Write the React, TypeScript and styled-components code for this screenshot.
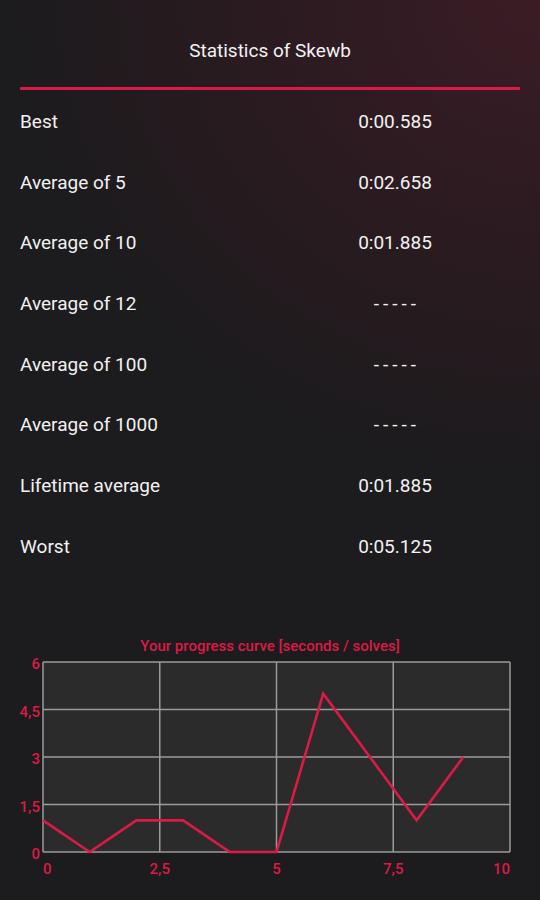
import * as React from "react";
import styled, {createGlobalStyle} from "styled-components";

const GlobalStyle = createGlobalStyle`
  html, body {
    margin: 0;
    padding: 0;
    background: #1c1b1d;
  }
  * {
    box-sizing: border-box;
  }
`;

const RED = "#dc1a45";

const Page = styled.div`
  width: 540px;
  min-height: 900px;
  font-family: Roboto, "Noto Sans", sans-serif;
  color: #f2f2f2;
  background:
    radial-gradient(ellipse 620px 560px at 100% 0%, #3b1c25 0%, #2c1b21 40%, rgba(28, 27, 29, 0) 85%),
    #1c1b1d;
  overflow: hidden;
`;

const Header = styled.header`
  padding: 39px 20px 0;
`;

const Title = styled.h1`
  margin: 0;
  font-size: 19px;
  line-height: 24px;
  font-weight: 400;
  text-align: center;
`;

const Divider = styled.div`
  height: 3px;
  margin-top: 24px;
  background: ${RED};
  border-radius: 1px;
`;

const StatsList = styled.div`
  padding: 1px 20px 0;
`;

const StatRow = styled.div`
  display: grid;
  grid-template-columns: 1fr 1fr;
  align-items: center;
  height: 60.7px;
  font-size: 19px;
`;

const Label = styled.span`
  text-align: left;
`;

const Value = styled.span<{ $empty?: boolean }>`
  text-align: center;
  letter-spacing: ${p => (p.$empty ? "4px" : "0")};
  padding-left: ${p => (p.$empty ? "4px" : "0")};
`;

const ChartSection = styled.section`
  margin-top: 60px;
  display: flex;
  flex-direction: column;
  align-items: center;
`;

const ChartTitle = styled.div`
  font-size: 15px;
  line-height: 18px;
  font-weight: 500;
  color: ${RED};
`;

const ChartSvg = styled.svg`
  display: block;
  width: 540px;
  height: 232px;
`;

interface IStat {
    label: string;
    value: string | null;
}

const stats: IStat[] = [
    {label: "Best", value: "0:00.585"},
    {label: "Average of 5", value: "0:02.658"},
    {label: "Average of 10", value: "0:01.885"},
    {label: "Average of 12", value: null},
    {label: "Average of 100", value: null},
    {label: "Average of 1000", value: null},
    {label: "Lifetime average", value: "0:01.885"},
    {label: "Worst", value: "0:05.125"},
];

const solves = [1, 0, 1, 1, 0, 0, 5, 3, 1, 3];

// plot box inside the svg
const PX0 = 43;
const PX1 = 510;
const PY0 = 7;
const PY1 = 197;
const X_MAX = 10;
const Y_MAX = 6;

const sx = (v: number) => PX0 + (v / X_MAX) * (PX1 - PX0);
const sy = (v: number) => PY1 - (v / Y_MAX) * (PY1 - PY0);

const xTicks = [0, 2.5, 5, 7.5, 10];
const yTicks = [0, 1.5, 3, 4.5, 6];
const fmt = (v: number) => String(v).replace(".", ",");

const ProgressChart: React.FC = () => {
    const points = solves.map((v, i) => `${sx(i)},${sy(v)}`).join(" ");
    return (
        <ChartSvg viewBox="0 0 540 232">
            <rect x={PX0} y={PY0} width={PX1 - PX0} height={PY1 - PY0} fill="#2b2b2b"/>
            {yTicks.map(t => (
                <line key={"h" + t} x1={PX0} x2={PX1} y1={sy(t)} y2={sy(t)}
                      stroke="#9b9b9b" strokeWidth={1.5}/>
            ))}
            {xTicks.map(t => (
                <line key={"v" + t} x1={sx(t)} x2={sx(t)} y1={PY0} y2={PY1}
                      stroke="#9b9b9b" strokeWidth={1.5}/>
            ))}
            <polyline points={points} fill="none" stroke={RED} strokeWidth={2.6}
                      strokeLinejoin="miter"/>
            {yTicks.map(t => (
                <text key={"yl" + t} x={40} y={sy(t) + 7} textAnchor="end"
                      fontFamily="Roboto, sans-serif" fontSize={15} fontWeight={500} fill={RED}>
                    {fmt(t)}
                </text>
            ))}
            {xTicks.map((t, i) => (
                <text key={"xl" + t} x={sx(t)} y={219}
                      textAnchor={i === 0 ? "start" : i === xTicks.length - 1 ? "end" : "middle"}
                      fontFamily="Roboto, sans-serif" fontSize={15} fontWeight={500} fill={RED}>
                    {fmt(t)}
                </text>
            ))}
        </ChartSvg>
    );
};

export default function App() {
    return (
        <Page>
            <GlobalStyle/>
            <Header>
                <Title>Statistics of Skewb</Title>
                <Divider/>
            </Header>
            <StatsList>
                {stats.map(s => (
                    <StatRow key={s.label}>
                        <Label>{s.label}</Label>
                        <Value $empty={!s.value}>{s.value ?? "-----"}</Value>
                    </StatRow>
                ))}
            </StatsList>
            <ChartSection>
                <ChartTitle>Your progress curve [seconds / solves]</ChartTitle>
                <ProgressChart/>
            </ChartSection>
        </Page>
    );
}
